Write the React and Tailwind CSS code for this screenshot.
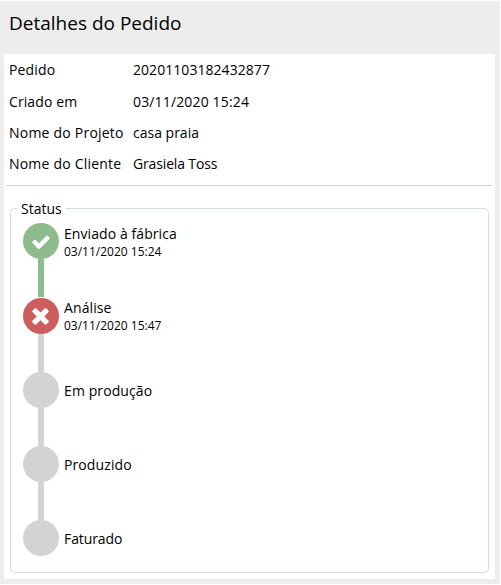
const details = [
  { label: 'Pedido', value: '20201103182432877', row: 'h-[31px]', labelCls: 'tracking-[0.15px]', valueCls: 'tracking-[0.05px]' },
  { label: 'Criado em', value: '03/11/2020 15:24', row: 'h-8', labelCls: 'tracking-[0.1px]', valueCls: 'tracking-[0.15px]' },
  { label: 'Nome do Projeto', value: 'casa praia', row: 'h-[31px]', labelCls: 'tracking-[0.22px]', valueCls: 'tracking-[0px]' },
  { label: 'Nome do Cliente', value: 'Grasiela Toss', row: 'h-[31px]', labelCls: 'tracking-[0.2px]', valueCls: 'tracking-[-0.15px]' },
];

const steps = [
  { name: 'Enviado à fábrica', date: '03/11/2020 15:24', state: 'done', row: 'h-[75px]', textCls: 'h-[38px]', nameCls: 'tracking-[0.08px]' },
  { name: 'Análise', date: '03/11/2020 15:47', state: 'failed', row: 'h-[74px]', textCls: 'h-9', nameCls: 'tracking-[0.1px]' },
  { name: 'Em produção', state: 'pending', row: 'h-[74px]', textCls: 'h-[38px]', nameCls: 'tracking-[0.1px]' },
  { name: 'Produzido', state: 'pending', row: 'h-[74px]', textCls: 'h-[38px]', nameCls: 'tracking-[0.1px]' },
  { name: 'Faturado', state: 'pending', row: 'h-9', textCls: 'h-[38px]', last: true, nameCls: 'tracking-[-0.1px]' },
];

const dotColors = { done: 'bg-[#8fbc8f]', failed: 'bg-[#cd5c5c]', pending: 'bg-[#d3d3d3]' };
const lineColors = { done: 'bg-[#8fbc8f]', failed: 'bg-[#d3d3d3]', pending: 'bg-[#d3d3d3]' };

function StateIcon({ state }) {
  if (state === 'done')
    return (
      <svg className="mt-px mr-px size-5 shrink-0" viewBox="0 0 1792 1792" fill="white">
        <path d="M1671 566q0 40-28 68l-724 724-136 136q-28 28-68 28t-68-28l-136-136-362-362q-28-28-28-68t28-68l136-136q28-28 68-28t68 28l294 295 656-657q28-28 68-28t68 28l136 136q28 28 28 68z" />
      </svg>
    );
  if (state === 'failed')
    return (
      <svg className="mr-px mb-0.5 size-[25px] shrink-0" viewBox="0 0 1792 1792" fill="white">
        <path d="M1490 1322q0 40-28 68l-136 136q-28 28-68 28t-68-28l-294-294-294 294q-28 28-68 28t-68-28l-136-136q-28-28-28-68t28-68l294-294-294-294q-28-28-28-68t28-68l136-136q28-28 68-28t68 28l294 294 294-294q28-28 68-28t68 28l136 136q28 28 28 68t-28 68l-294 294 294 294q28 28 28 68z" />
      </svg>
    );
  return null;
}

function Step({ name, date, state, row, last, textCls, nameCls }) {
  return (
    <li className={`flex ${row}`}>
      <div className="flex w-9 flex-col items-center">
        <span className={`flex size-9 shrink-0 items-center justify-center rounded-full ${dotColors[state]}`}>
          <StateIcon state={state} />
        </span>
        {!last && <span className={`w-1.5 grow ${lineColors[state]} ${state === 'done' ? 'mb-px' : ''}`} />}
      </div>
      <div className={`flex flex-col justify-center pl-[5px] ${textCls}`}>
        <span className={`leading-5 ${nameCls}`}>{name}</span>
        {date && <span className="text-[12px] leading-4">{date}</span>}
      </div>
    </li>
  );
}

export default function App() {
  return (
    <div className="h-[585px] w-[501px] bg-white py-px pr-px font-['Open_Sans',sans-serif] text-[14px] whitespace-nowrap text-black">
      <main className="flex h-full flex-col bg-[#ededed] pr-[5px] pb-[5px] pl-1">
        <h1 className="h-[53px] pt-2 pl-[5px] text-[19px] leading-7">Detalhes do Pedido</h1>
        <section className="grow bg-white">
          <dl className="mr-[3px] ml-0.5 h-[132px] border-b border-[#d0d0d0] pl-[3px]">
            {details.map((d) => (
              <div key={d.label} className={`flex items-center ${d.row}`}>
                <dt className={`w-[124px] ${d.labelCls}`}>{d.label}</dt>
                <dd className={d.valueCls}>{d.value}</dd>
              </div>
            ))}
          </dl>
          <fieldset className="mt-3 mr-1.5 ml-1.5 h-[375px] rounded-[5px] border border-[#d3dde6] pl-3">
            <legend className="-ml-1.5 h-[21px] px-1 leading-[22px]">Status</legend>
            <ul className="mt-1">
              {steps.map((s) => (
                <Step key={s.name} {...s} />
              ))}
            </ul>
          </fieldset>
        </section>
      </main>
    </div>
  );
}
